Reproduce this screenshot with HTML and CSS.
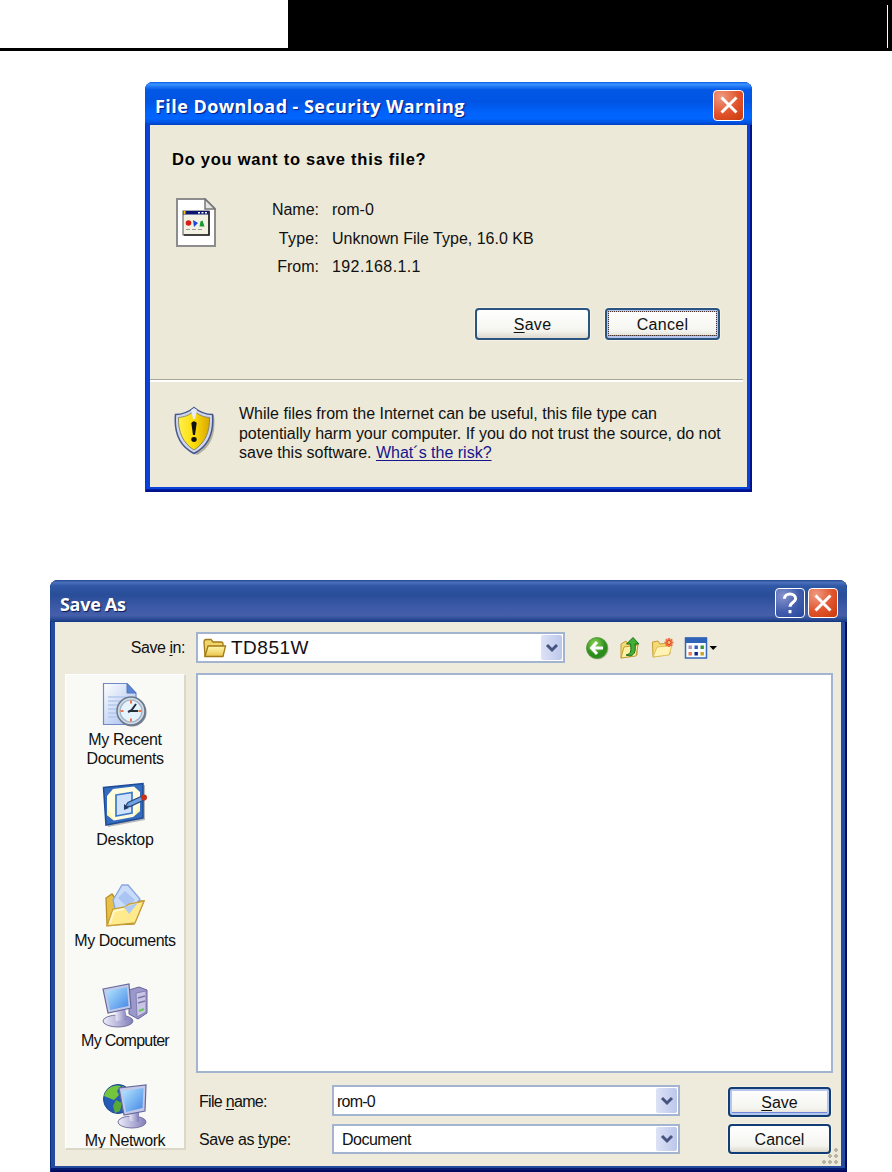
FILE: index.html
```
<!DOCTYPE html>
<html lang="en">
<head>
<meta charset="utf-8">
<title>Save configuration file</title>
<link rel="stylesheet" href="styles.css">
</head>
<body>
<header class="page-head"><div class="page-band"><span class="band-rule"></span></div></header>

<section class="window download">
  <div class="titlebar">
    <h1 class="title"><span class="t-download">File Download - Security Warning</span></h1>
    <button class="caption close" aria-label="Close"><svg viewBox="0 0 30 30"><path d="M7 7 L23 23 M23 7 L7 23"/></svg></button>
  </div>
  <div class="panel">
    <h2 class="question"><span class="t-question">Do you want to save this file?</span></h2>
    <div class="details">
      <svg class="file-icon" viewBox="0 0 40 49">
        <path d="M1 1 H29 L39 11 V48 H1 Z" fill="#fff" stroke="#8d8d8d" stroke-width="2"/>
        <path d="M29 1 V11 H39 Z" fill="#e4e4e4" stroke="#777" stroke-width="1.5"/>
        <rect x="7" y="13" width="26" height="24" fill="#f3f1e2" stroke="#555" stroke-width="1"/>
        <path d="M33 13 V37 H8" fill="none" stroke="#222" stroke-width="1.6"/>
        <rect x="7" y="13" width="25.500" height="3.500" fill="#0a1670"/>
        <path d="M7.500 13 h2 v3 h-2z" fill="#f5c518"/><path d="M22 14.700 h9" stroke="#fff" stroke-width="1.400" stroke-dasharray="2 1.500"/>
        <circle cx="12.500" cy="25" r="2.800" fill="#d81e12"/><path d="M17 22 l5 3 -4 4z" fill="#1c46d8"/><path d="M23.500 28.500 l1-5 2-1 2 6z" fill="#189a36"/>
        <path d="M10 31.500 h17" stroke="#999" stroke-width="1.200" stroke-dasharray="4 2"/>
      </svg>
      <dl class="facts">
        <dt><span class="t-name">Name:</span></dt><dd><span class="t-rom">rom-0</span></dd>
        <dt><span class="t-type">Type:</span></dt><dd><span class="t-unknown">Unknown File Type, 16.0 KB</span></dd>
        <dt><span class="t-from">From:</span></dt><dd><span class="t-ip">192.168.1.1</span></dd>
      </dl>
    </div>
    <div class="actions">
      <button class="btn"><span class="t-save"><u>S</u>ave</span></button>
      <button class="btn default focus"><span class="t-cancel">Cancel</span></button>
    </div>
    <div class="warning">
      <svg class="shield" viewBox="0 0 42 50">
        <defs><linearGradient id="gold" x1="0" x2="1"><stop offset="0" stop-color="#fff04e"/><stop offset=".5" stop-color="#fddc08"/><stop offset="1" stop-color="#d9a800"/></linearGradient></defs>
        <path d="M22 3 C28 8 33 9 40 9 C42 27 38 41 23 49 C8 42 2 28 4 10 C12 9 17 7 22 3Z" fill="#8d8a7c" opacity=".6"/>
        <path d="M20 1.500 C26 6.500 32 8.500 38.500 8.500 C40 26 35 40 20 47.500 C5 40 0 26 1.500 8.500 C8 8.500 14 6.500 20 1.500Z" fill="#cfd6ee" stroke="#46578c" stroke-width="1.500"/>
        <path d="M20 5 C25 9.500 30 11 35.500 11.500 C36 26 31 37 20 44 C9 37 4 26 4.500 11.500 C10 11 15 9.500 20 5Z" fill="url(#gold)" stroke="#8c8a5a" stroke-width="1"/>
        <path d="M17 4 L20 2 L23 4 L21 13 H19Z" fill="#e8ecf8"/>
        <path d="M17.300 17 q2.700-3.500 5.400 0 L21 29 h-2z" fill="#111"/><ellipse cx="20" cy="33.500" rx="2.700" ry="2.400" fill="#111"/>
      </svg>
      <p class="notice">
        <span class="line t-w1">While files from the Internet can be useful, this file type can</span>
        <span class="line t-w2">potentially harm your computer. If you do not trust the source, do not</span>
        <span class="line"><span class="t-w3">save this software. </span><a class="risk" href="#">What´s the risk?</a></span>
      </p>
    </div>
  </div>
</section>

<section class="window saveas">
  <div class="titlebar">
    <h1 class="title"><span class="t-saveas">Save As</span></h1>
    <button class="caption help" aria-label="Help"><svg viewBox="0 0 30 30"><path d="M9 10.500 C9 3.500 21 3.500 21 10.500 C21 14 15 14.500 15 19 M15 22.500 V26"/></svg></button>
    <button class="caption close" aria-label="Close"><svg viewBox="0 0 30 30"><path d="M7 7 L23 23 M23 7 L7 23"/></svg></button>
  </div>
  <div class="panel">
    <div class="lookin">
      <label class="lookin-label"><span class="t-savein">Save <u>i</u>n:</span></label>
      <div class="combo folder">
        <svg class="folder-icon" viewBox="0 0 24 20">
          <defs><linearGradient id="fold" x1="0" y1="0" x2="0" y2="1"><stop offset="0" stop-color="#fff8ae"/><stop offset="1" stop-color="#e9c44c"/></linearGradient></defs>
          <path d="M2 18 L1 4 Q1 1.500 3 1.500 H8 L10 4 H18 Q20 4 20 6 V17Z" fill="#f1d568" stroke="#a07a16" stroke-width="1.300"/>
          <path d="M2 18.500 L5 8 H22.500 L20 18.500Z" fill="url(#fold)" stroke="#a07a16" stroke-width="1.300"/>
        </svg>
        <span class="value"><span class="t-td">TD851W</span></span>
        <span class="drop"><svg viewBox="0 0 14 10"><path d="M2 2 L7 7 L12 2"/></svg></span>
      </div>
      <div class="tools">
        <svg viewBox="0 0 24 24">
          <defs><radialGradient id="green" cx=".4" cy=".3"><stop offset="0" stop-color="#8fd653"/><stop offset="1" stop-color="#2c8c1d"/></radialGradient></defs>
          <circle cx="12.500" cy="12.500" r="11" fill="#999682" opacity=".5"/><circle cx="12" cy="12" r="10.500" fill="url(#green)" stroke="#4a9a34" stroke-width=".8"/>
          <path d="M12 6 L6.500 12 L12 18 M7 12 H18" fill="none" stroke="#fff" stroke-width="3"/>
        </svg>
        <svg viewBox="0 0 24 24">
          <path d="M3 22 V8 L8 5 L10 8 H19 V19Z" fill="#f4db75" stroke="#c59c32"/>
          <path d="M3 22 L6 11 L20 9 L18 20Z" fill="#fff0a6" stroke="#c59c32"/>
          <path d="M8 19 C14 18 13 13 12.500 8 H8.500 L15 1.500 L21 8 H17 C18 14 17 19 12 20Z" fill="#3faf35" stroke="#1c6c1b"/>
        </svg>
        <svg viewBox="0 0 24 24">
          <path d="M2 21 L1.500 6 L7 5 L9 8 L18 7 L19 18Z" fill="#f4db75" stroke="#c59c32"/>
          <path d="M2 21 L6 11 L21 9.500 L18 19Z" fill="#fff3b5" stroke="#dfc05a"/>
          <path d="M18 2 V11 M13.500 6.500 H22.500 M14.800 3.300 L21.200 9.700 M21.200 3.300 L14.800 9.700" stroke="#ee7142" stroke-width="2.200"/><circle cx="18" cy="6.500" r="2" fill="#ffbd70" stroke="#dc4527"/>
        </svg>
        <svg class="views" viewBox="0 0 34 24">
          <rect x="1.500" y="2" width="21" height="20" fill="#f7fbff" stroke="#3569b5" stroke-width="1.500"/><rect x="1" y="1.500" width="22" height="5.500" fill="#2f63b8"/>
          <g><rect x="4.500" y="9.500" width="3.400" height="3.500" fill="#a88fbd"/><rect x="10.500" y="9.500" width="3.400" height="3.500" fill="#3958bd"/><rect x="16.500" y="9.500" width="3.400" height="3.500" fill="#3c9630"/><rect x="4.500" y="16" width="3.400" height="3.500" fill="#ee7b4a"/><rect x="10.500" y="16" width="3.400" height="3.500" fill="#10237e"/><rect x="16.500" y="16" width="3.400" height="3.500" fill="#cda41f"/></g>
          <path d="M25.500 10 H33 L29.200 14Z" fill="#000"/>
        </svg>
      </div>
    </div>
    <div class="main">
      <nav class="places">
        <a class="place">
          <svg viewBox="0 0 46 46">
            <defs><linearGradient id="sheet" x1="0" y1="0" x2="1" y2="1"><stop offset="0" stop-color="#fff"/><stop offset="1" stop-color="#9fb9ec"/></linearGradient></defs>
            <path d="M1.500 1.500 H25 L34 11 V42.500 H1.500Z" fill="url(#sheet)" stroke="#7189c4" stroke-width="1.200"/>
            <path d="M25 1.500 V11 H34Z" fill="#5b86d6" stroke="#5577bd"/>
            <path d="M6 15h18M6 19h14M6 23h12M6 27h10M6 31h10M6 35h12" stroke="#b4c9ee" stroke-width="1.300"/>
            <circle cx="30" cy="30" r="14.500" fill="#7d8490"/><circle cx="29" cy="29" r="14" fill="#d3dce4" stroke="#69788c" stroke-width="1.500"/><circle cx="29" cy="29" r="11" fill="#e4f3fc" stroke="#9eb2c8" stroke-width="1.200"/>
            <path d="M29 18.500v3M29 36.500v3M18.500 29h3M36.500 29h3" stroke="#ef7441" stroke-width="2"/>
            <path d="M34 22 L29 29 L36 29 M30 28 L26 30" fill="none" stroke="#25303e" stroke-width="2"/>
          </svg>
          <span class="t-recent">My Recent</span><span class="t-docs">Documents</span>
        </a>
        <a class="place">
          <svg viewBox="0 0 46 46">
            <path d="M4 7 L43 3 V38 L6 45Z" fill="#777" opacity=".5"/>
            <path d="M1.500 5.500 L41 1.500 V36 L4 43Z" fill="#346dc0" stroke="#1d4b96" stroke-width="1.500"/>
            <path d="M11 7 L32 4.500 L38 10 V29 L31 35 L12 38.500 L5 33 V14Z" fill="#fffce0"/><path d="M5 25 L12 38.500 L31 35 L38 23 V29 L31 35 L12 38.500 L5 33Z" fill="#fff6ad"/>
            <path d="M14 13 L30 10.500 V31 L14 34Z" fill="#cfe2fd" stroke="#3c79c9" stroke-width="1.700"/>
            <path d="M23 25 L26 20.500 L40 14 L42 18 L28 24.500Z" fill="#6ea1e0" stroke="#28487e" stroke-width="1.300"/><circle cx="42" cy="15.500" r="3" fill="#c8311a"/><path d="M22 22 l5 4 -5 2z" fill="#243b66"/>
          </svg>
          <span class="t-desktop">Desktop</span>
        </a>
        <a class="place">
          <svg viewBox="0 0 46 46">
            <path d="M5 42 L4 15 L10 11 L13 15 H20 L36 18 L42 18 L32 41Z" fill="#e8bf47" stroke="#b68d2b" stroke-width="1.300"/>
            <path d="M11 17 L20 2 L26 2 L38 16 L30 27 L14 30Z" fill="#c9dcfa" stroke="#86a6df" stroke-width="1.300"/><path d="M16 15 L23 8 L33 17 L25 24Z" fill="#9db9ef" opacity=".7"/>
            <path d="M5 43 L11 26 L23 24 L27 21 L42 18 L33 40Z" fill="#ffea8d" stroke="#c79d34" stroke-width="1.300"/><path d="M22 24 L36 20 L27 31Z" fill="#b0caf2"/><path d="M8 40 L12 28 L22 26" fill="none" stroke="#fff8cf" stroke-width="2"/>
          </svg>
          <span class="t-mydocs">My Documents</span>
        </a>
        <a class="place">
          <svg viewBox="0 0 46 46">
            <defs><linearGradient id="screen" x1="0" y1="0" x2="1" y2="1"><stop offset="0" stop-color="#b9e8ff"/><stop offset="1" stop-color="#4286e6"/></linearGradient><linearGradient id="metal" x1="0" x2="1"><stop offset="0" stop-color="#eeedf9"/><stop offset="1" stop-color="#807eb9"/></linearGradient></defs>
            <path d="M27 7 L37 4 L45 7 V30 L36 36 L27 31Z" fill="#9b98cb" stroke="#68639c"/><path d="M34 10 L44 8 V29 L35 34Z" fill="#c8c5e5" stroke="#8580b5"/><path d="M36 15 l7-2M36 20l7-2" stroke="#7a76a8" stroke-width="1.500"/><path d="M37 28l5-2" stroke="#65cb50" stroke-width="2"/>
            <ellipse cx="16" cy="38" rx="15" ry="6" fill="url(#metal)" stroke="#77739f"/><path d="M13 27 L23 25 L25 37 L14 38Z" fill="url(#metal)"/>
            <path d="M1 6 L27 1 L29 25 L6 30Z" fill="#c3c8e7" stroke="#64689d" stroke-width="1.200"/><path d="M4 8 L25 4 L26.500 23 L8 27Z" fill="url(#screen)"/>
          </svg>
          <span class="t-computer">My Computer</span>
        </a>
        <a class="place">
          <svg viewBox="0 0 46 46">
            <circle cx="16" cy="16" r="14.500" fill="#245bb6" stroke="#20458e"/><path d="M2 13 C4 5 12 1 19 3 L15 8 L17 12 L12 17 L7 15Z" fill="#73c53e"/><path d="M14 17 l6 3-2 8-5 2-2-7z" fill="#58aa35"/><path d="M20 3 l6 3-4 4z" fill="#8bd547"/>
            <ellipse cx="30" cy="39" rx="14" ry="6" fill="url(#metal)" stroke="#77739f"/><path d="M27 28 L37 28 L37 39 L28 38Z" fill="url(#metal)"/>
            <path d="M17 5 L44 2 L43 28 L22 32Z" fill="#c3c8e7" stroke="#64689d" stroke-width="1.200"/><path d="M20 8 L41.500 5 L40.500 25 L24 29Z" fill="url(#screen)"/>
          </svg>
          <span class="t-network">My Network</span>
        </a>
      </nav>
      <div class="work">
        <div class="listing"></div>
        <div class="form">
          <div class="fields">
            <label><span class="t-filename">File <u>n</u>ame:</span></label>
            <div class="combo name"><span class="value"><span class="t-rom2">rom-0</span></span><span class="drop"><svg viewBox="0 0 14 10"><path d="M2 2 L7 7 L12 2"/></svg></span></div>
            <label><span class="t-astype">Save as <u>t</u>ype:</span></label>
            <div class="combo type"><span class="value"><span class="t-document">Document</span></span><span class="drop"><svg viewBox="0 0 14 10"><path d="M2 2 L7 7 L12 2"/></svg></span></div>
          </div>
          <div class="stack">
            <button class="btn default"><span class="t-save2"><u>S</u>ave</span></button>
            <button class="btn"><span class="t-cancel2">Cancel</span></button>
          </div>
        </div>
      </div>
    </div>
    <i class="grip"></i>
  </div>
</section>
</body>
</html>
```
FILE: styles.css
```
* { box-sizing: border-box; }
body { margin: 0; width: 892px; height: 1172px; overflow: hidden; background: #fff; color: #111; font: 16px/20px "Liberation Sans", Arial, sans-serif; }
h1, h2, p, dl, dd { margin: 0; }
button { padding: 0; font: inherit; color: inherit; }
svg { display: block; flex: none; }
span { white-space: pre; }
u { text-underline-offset: 2px; text-decoration-thickness: 1px; }

.page-head { height: 51px; border-bottom: 3px solid #000; }
.page-band { display: flex; justify-content: flex-end; height: 48px; margin-left: 288px; padding: 5px 4px 0 0; background: #000; }
.band-rule { width: 1px; height: 43px; background: #fff; }

/* Window frames */
.window { display: flex; flex-direction: column; border-radius: 8px 8px 0 0; }
.titlebar { display: flex; align-items: center; flex: none; }
.title { flex: 1; color: #fff; font: bold 18px/24px "Open Sans", sans-serif; text-shadow: 1px 1px 1px #0a1883; }
.panel { flex: 1; display: flex; flex-direction: column; position: relative; }
.caption { display: flex; align-items: center; justify-content: center; width: 31px; height: 31px; border: 1.5px solid #fff; border-radius: 4px; }
.caption svg { width: 28px; height: 28px; fill: none; stroke: #fff; stroke-width: 3.2; }
.close { background: radial-gradient(circle at 25% 20%, #f09a80, #e0532c 55%, #c83a08); }
.help { background: radial-gradient(circle at 25% 25%, #8793cc, #3f5bab 55%, #2547a0); margin-right: 3px; }

.download { width: 607px; height: 410px; margin: 31px 0 0 145px; padding: 0 5px 5px; background: #0842d8; box-shadow: inset 1px 0 #0831d9, inset -2px -2px #00138c, inset 0 -3px #001ea0; }
.download .titlebar { height: 43px; margin: 0 -5px; padding: 3px 8px 0 10px; border-radius: 8px 8px 0 0; background: linear-gradient(#0a5ae8 0, #3c96ff 5%, #2a80f8 9%, #0458e6 18%, #0054e3 45%, #0062fa 70%, #0066ff 85%, #0050dd 95%, #0040c0); }
.download .title { padding-top: 1px; }
.download .panel { background: #ece9d8; }

.saveas { width: 797px; height: 592px; margin: 88px 0 0 50px; padding: 0 6px 6px 5px; background: #254c9c; box-shadow: inset 1px 0 #0b2a82, inset -2px -2px #000c60, inset 0 -4px #061a70; }
.saveas .titlebar { height: 42px; margin: 0 -6px 0 -5px; padding: 4px 9px 0 10px; border-radius: 8px 8px 0 0; background: linear-gradient(#254793 0, #4a70bb 6%, #3058a5 14%, #294d98 35%, #3f5ba8 68%, #445ea9 85%, #22448c 96%, #123480); }
.saveas .title { padding-top: 1px; text-shadow: 1px 1px 1px #0a1b55; }
.saveas .caption { width: 30px; height: 30px; }
.saveas .panel { background: #eeebdc; }

/* Buttons */
.btn { display: flex; align-items: center; justify-content: center; padding-top: 1px; border: 2px solid #2b5580; border-radius: 4px; background: linear-gradient(#fff, #f4f4ef 75%, #dcd8cc); box-shadow: 0 0 0 1px #f5f2e6; color: #111; }
.btn.default { box-shadow: inset 0 0 0 2px #b4c5ee, inset 0 -3px #6c86d8, 0 0 0 1px #f5f2e6; }
.btn.focus { position: relative; }
.btn.focus::after { content: ""; position: absolute; inset: 1px 1px 2px; border: 1px dotted #4a342c; }

/* Download prompt */
.question { padding: 24px 0 0 22px; font: bold 16.5px/20px "Liberation Sans", sans-serif; color: #000; }
.details { display: flex; padding: 29px 0 0 26px; height: 113px; }
.file-icon { width: 40px; height: 49px; }
.facts { display: grid; grid-template-columns: 103px 1fr; grid-auto-rows: 28.500px; column-gap: 13px; margin-top: -2px; }
.facts dt { text-align: right; line-height: 28px; }
.facts dd { line-height: 28px; }
.actions { display: flex; gap: 15px; padding: 26px 0 0 325px; height: 97px; }
.actions .btn { width: 115px; height: 32px; }
.warning { position: relative; display: flex; flex: 1; margin-right: 4px; border-top: 1px solid #aaa699; box-shadow: inset 0 2px #fff; padding-left: 24px; }
.shield { width: 42px; height: 50px; margin-top: 26px; }
.notice { margin: 24px 0 0 23px; line-height: 19.500px; }
.line { display: block; }
.risk { color: #16168c; text-underline-offset: 2px; text-decoration-thickness: 1px; }

/* Save As */
.lookin { display: flex; align-items: center; height: 31px; margin-top: 10px; }
.lookin-label { width: 130px; text-align: right; }
.combo { display: flex; align-items: center; background: #fff; border: 2px solid #a3b4d0; padding: 1px; }
.value { flex: 1; }
.drop { display: flex; align-items: center; justify-content: center; align-self: stretch; width: 21px; border-radius: 2px; background: linear-gradient(90deg, #dde2f6, #bcc7eb); }
.drop svg { width: 14px; height: 10px; fill: none; stroke: #46557f; stroke-width: 3; }
.folder { width: 369px; height: 31px; margin-left: 11px; padding-left: 5px; }
.folder-icon { width: 24px; height: 20px; }
.folder .value { padding-left: 4px; font-size: 19px; }
.tools { display: flex; gap: 9px; margin-left: 20px; }
.tools svg { width: 24px; height: 24px; }
.tools .views { width: 34px; }
.main { display: flex; gap: 10px; margin: 10px 0 0 10px; }
.places { width: 121px; height: 476px; margin-top: 1px; padding-top: 7px; background: #f9faf6; border: solid; border-width: 1px 2px 2px 1px; border-color: #fff #dcd8c8 #dcd8c8 #fff; overflow: hidden; }
.place { display: flex; flex-direction: column; align-items: center; height: 100.250px; line-height: 19px; }
.place svg { width: 46px; height: 46px; margin-bottom: 2px; }
.work { width: 637px; }
.listing { height: 400px; background: #fff; border: 2px solid #a3b4d0; }
.form { display: flex; justify-content: space-between; }
.fields { display: grid; grid-template-columns: 133px 348px; grid-template-rows: 31px 30px; row-gap: 8px; margin: 12px 0 0 3px; align-items: center; }
.fields label { padding-top: 2px; }
.fields .combo { height: 100%; }
.fields .value { padding-top: 2px; }
.name .value { padding-left: 2px; }
.type .value { padding-left: 7px; }
.stack { display: flex; flex-direction: column; gap: 7px; margin: 14px 2px 0 0; }
.stack .btn { width: 103px; height: 30px; border-color: #123c74; }
.grip { position: absolute; right: 2px; bottom: 1px; width: 18px; height: 18px; background: radial-gradient(circle at 3px 3px, #b8b4a3 1.800px, transparent 2px) 0 0 / 6px 6px; clip-path: polygon(100% 0, 100% 100%, 0 100%, 0 66%, 33% 66%, 33% 33%, 66% 33%, 66% 0); }

/* Tracking */
.t-download { letter-spacing: .44px; }
.t-saveas { letter-spacing: -.3px; }
.t-question { letter-spacing: .75px; }
.t-type { letter-spacing: .2px; }
.t-ip { letter-spacing: .4px; }
.t-save, .t-cancel { letter-spacing: .3px; }
.t-w2 { letter-spacing: -.03px; }
.t-td { letter-spacing: .5px; }
.t-savein { letter-spacing: -.45px; }
.t-recent { letter-spacing: -.35px; }
.t-docs, .t-mydocs { letter-spacing: -.45px; }
.t-desktop { letter-spacing: -.15px; }
.t-computer { letter-spacing: -.75px; }
.t-network { letter-spacing: -.4px; }
.t-filename { letter-spacing: -.7px; }
.t-astype { letter-spacing: -.4px; }
.t-rom2 { letter-spacing: -.8px; }
.t-document { letter-spacing: -.5px; }
```
